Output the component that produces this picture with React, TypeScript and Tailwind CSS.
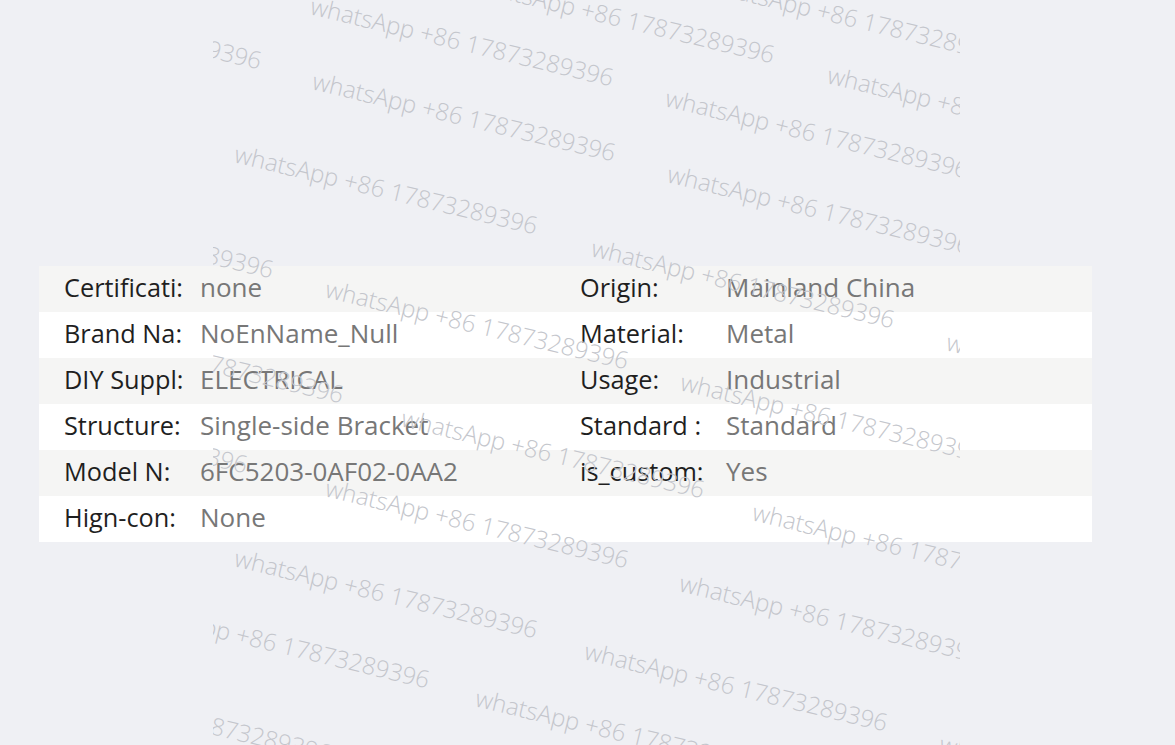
import React from "react";

const rows: [string, string, string, string][] = [
  ["Certificati:", "none", "Origin:", "Mainland China"],
  ["Brand Na:", "NoEnName_Null", "Material:", "Metal"],
  ["DIY Suppl:", "ELECTRICAL", "Usage:", "Industrial"],
  ["Structure:", "Single-side Bracket", "Standard :", "Standard"],
  ["Model N:", "6FC5203-0AF02-0AA2", "is_custom:", "Yes"],
  ["Hign-con:", "None", "", ""],
];

// baseline start points (page coords)
const marks: [number, number][] = [
  [309, 14], [470, -9], [706, -8], [311, 89], [-43, -3], [826, 83],
  [664, 106], [233, 162], [666, 182], [-31, 206], [590, 256], [324, 297],
  [945, 350], [39, 331], [679, 390], [400, 426], [-57, 401], [324, 496],
  [751, 520], [233, 566], [678, 591], [125, 616], [583, 659], [474, 706],
  [27, 690], [938, 752],
];

export default function App() {
  return (
    <div
      className="relative w-[1175px] h-[745px] overflow-hidden bg-[#eff0f4]"
      style={{ fontFamily: '"Open Sans", "Noto Sans", sans-serif' }}
    >
      <div className="pt-[266px] pl-[39px]">
        <div className="w-[1053px] flex flex-col">
          {rows.map((r, i) => (
            <div
              key={i}
              className={`flex h-[46px] pl-[25px] leading-[42px] ${
                i % 2 === 0 ? "bg-[#f5f5f4]" : "bg-white"
              }`}
            >
              <div className="w-[136px] text-[25.3px] text-[#1f1f1f] whitespace-nowrap">{r[0]}</div>
              <div className="w-[380px] text-[26px] text-[#777777] whitespace-nowrap">{r[1]}</div>
              <div className="w-[146px] text-[25.3px] text-[#1f1f1f] whitespace-nowrap">{r[2]}</div>
              <div className="text-[26px] text-[#777777] whitespace-nowrap">{r[3]}</div>
            </div>
          ))}
        </div>
      </div>

      <div className="absolute left-[213px] top-0 w-[747px] h-[745px] overflow-hidden pointer-events-none">
        {marks.map(([x, y], i) => (
          <div
            key={i}
            className="absolute whitespace-nowrap text-[24px] leading-[24px] font-light text-[#c4c6cc] origin-[0px_21px] rotate-[13.5deg]"
            style={{ left: x - 213, top: y - 21 }}
          >
            whatsApp +86 17873289396
          </div>
        ))}
      </div>
    </div>
  );
}
